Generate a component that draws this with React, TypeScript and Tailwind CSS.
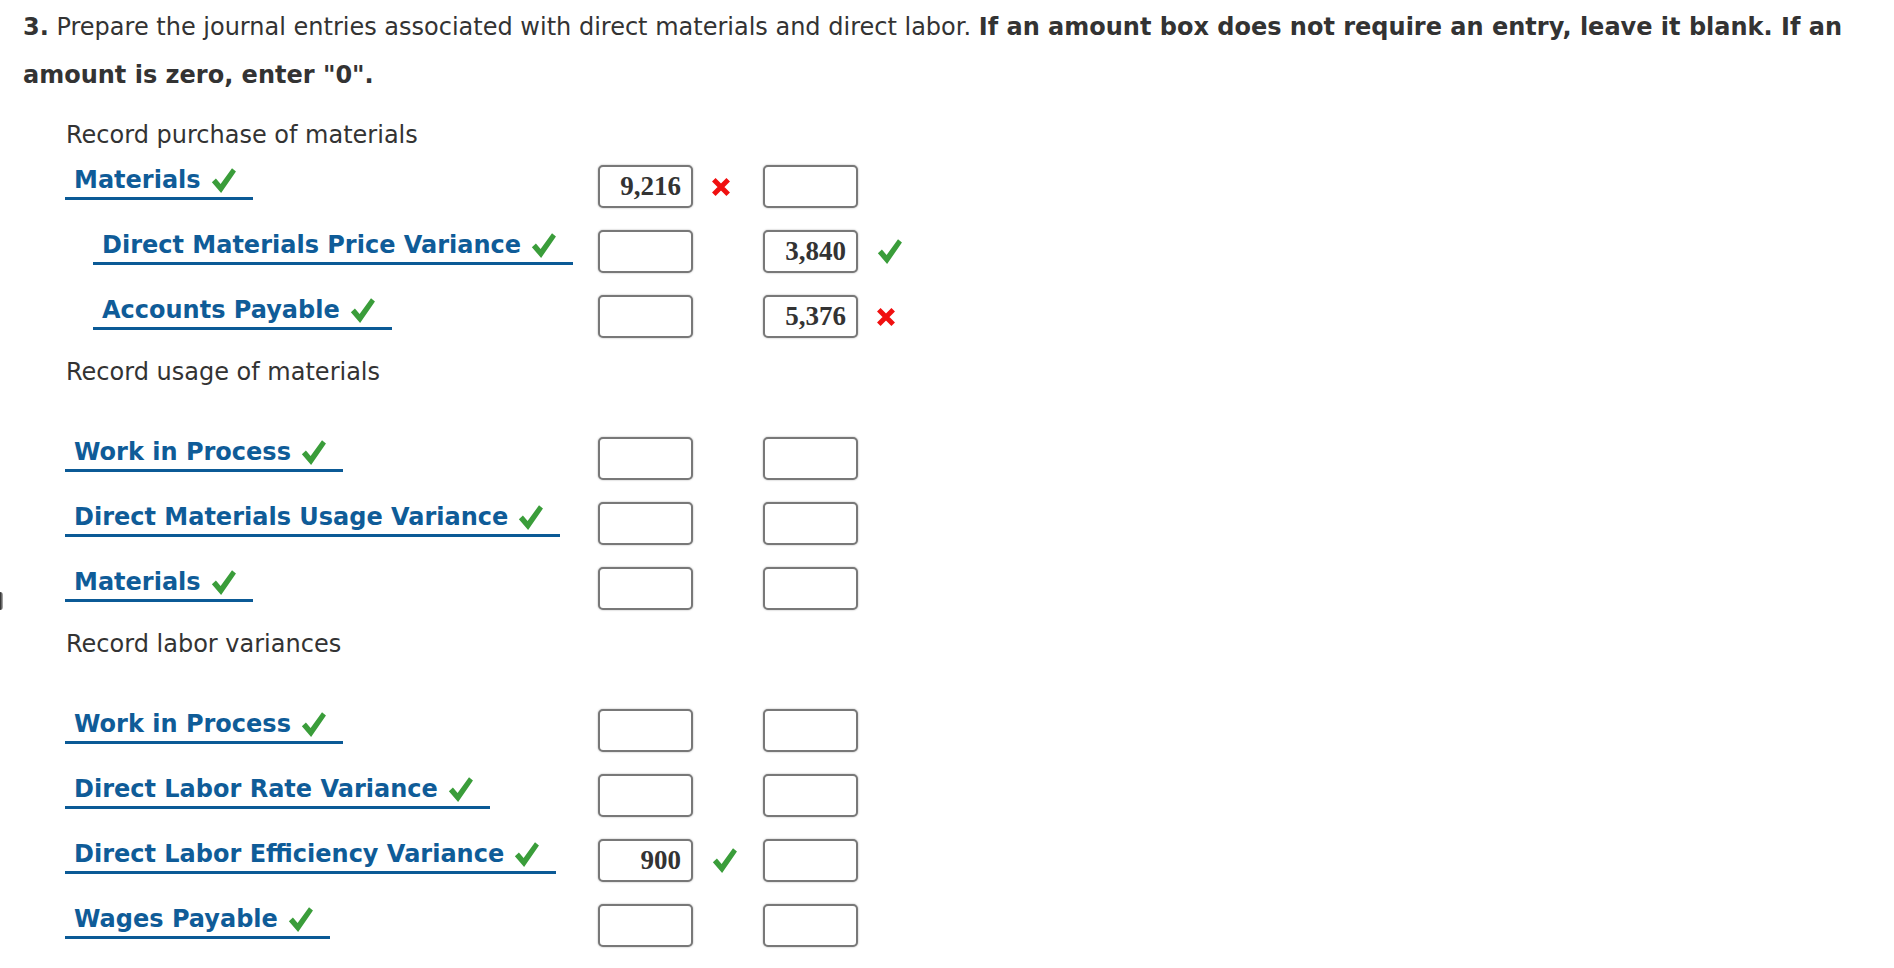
import React from "react";

type Mark = "check" | "x" | null;

type Row = {
  label: string;
  indent?: boolean;
  debit?: string;
  debitMark?: Mark;
  credit?: string;
  creditMark?: Mark;
};

type Section = {
  title: string;
  rows: Row[];
  spaced?: boolean;
};

const sections: Section[] = [
  {
    title: "Record purchase of materials",
    rows: [
      { label: "Materials", debit: "9,216", debitMark: "x" },
      { label: "Direct Materials Price Variance", indent: true, credit: "3,840", creditMark: "check" },
      { label: "Accounts Payable", indent: true, credit: "5,376", creditMark: "x" },
    ],
  },
  {
    title: "Record usage of materials",
    spaced: true,
    rows: [
      { label: "Work in Process" },
      { label: "Direct Materials Usage Variance" },
      { label: "Materials" },
    ],
  },
  {
    title: "Record labor variances",
    spaced: true,
    rows: [
      { label: "Work in Process" },
      { label: "Direct Labor Rate Variance" },
      { label: "Direct Labor Efficiency Variance", debit: "900", debitMark: "check" },
      { label: "Wages Payable" },
    ],
  },
];

function Check() {
  return (
    <svg width="25" height="27" viewBox="0 0 24 26" className="shrink-0">
      <path d="M0.8 14.6 L4.7 11 L9.2 16.4 L20.2 1.2 L24 4.4 L9.7 25 Z" fill="#3a9d3a" />
    </svg>
  );
}

function Cross() {
  return (
    <svg width="18" height="18" viewBox="0 0 18 18" className="shrink-0">
      <path d="M1.8 1.8 L16.2 16.2 M16.2 1.8 L1.8 16.2" stroke="#f01010" strokeWidth="5" />
    </svg>
  );
}

function MarkIcon({ mark }: { mark?: Mark }) {
  if (mark === "check") return <Check />;
  if (mark === "x") return <Cross />;
  return null;
}

function AmountBox({ value }: { value?: string }) {
  return (
    <div className="w-[95px] h-[43px] shrink-0 border-2 border-[#787878] rounded-[5px] shadow-[0_0_2px_rgba(0,0,0,0.35)] bg-white flex items-center justify-end pr-[10px] font-['Liberation_Serif','Times_New_Roman',serif] font-bold text-[27px] text-[#333]">
      {value}
    </div>
  );
}

function EntryRow({ row }: { row: Row }) {
  return (
    <div className="flex items-start h-[43px]">
      <div className="w-[533px] shrink-0 -mt-[3px]">
        <div
          className={`inline-flex items-center gap-[10px] pl-[9px] pr-[17px] pb-[3px] border-b-[3px] border-[#0b5a96] text-[#0f5c98] font-bold leading-[28px] ${
            row.indent ? "ml-[28px]" : ""
          }`}
        >
          <span>{row.label}</span>
          <Check />
        </div>
      </div>
      <AmountBox value={row.debit} />
      <div className="w-[70px] h-[43px] shrink-0 flex items-center pl-[19px]">
        <MarkIcon mark={row.debitMark} />
      </div>
      <AmountBox value={row.credit} />
      <div className="w-[70px] h-[43px] shrink-0 flex items-center pl-[19px]">
        <MarkIcon mark={row.creditMark} />
      </div>
    </div>
  );
}

export default function App() {
  return (
    <div className="relative min-h-screen bg-white text-[#333] text-[24px] font-['Verdana','DejaVu_Sans',sans-serif]">
      {/* stray edge of something cut off at the left */}
      <div className="absolute left-0 top-[592px] w-[3px] h-[18px] rounded-r-full bg-gradient-to-r from-[#222] to-[#bbb]" />

      <p className="pl-[23px] pr-[8px] pt-[3px] leading-[48px]">
        <span className="font-bold">3.</span> Prepare the journal entries associated with direct materials and direct
        labor.{" "}
        <span className="font-bold">
          If an amount box does not require an entry, leave it blank. If an amount is zero, enter "0".
        </span>
      </p>

      <div className="pl-[65px] pt-[22px] pb-[20px]">
        {sections.map((s, i) => (
          <div key={i} className={i > 0 ? "mt-[20px]" : ""}>
            <div className="pl-[1px] leading-[28px]">{s.title}</div>
            <div className={`flex flex-col gap-[22px] ${s.spaced ? "mt-[51px]" : "mt-[16px]"}`}>
              {s.rows.map((r, j) => (
                <EntryRow key={j} row={r} />
              ))}
            </div>
          </div>
        ))}
      </div>
    </div>
  );
}
